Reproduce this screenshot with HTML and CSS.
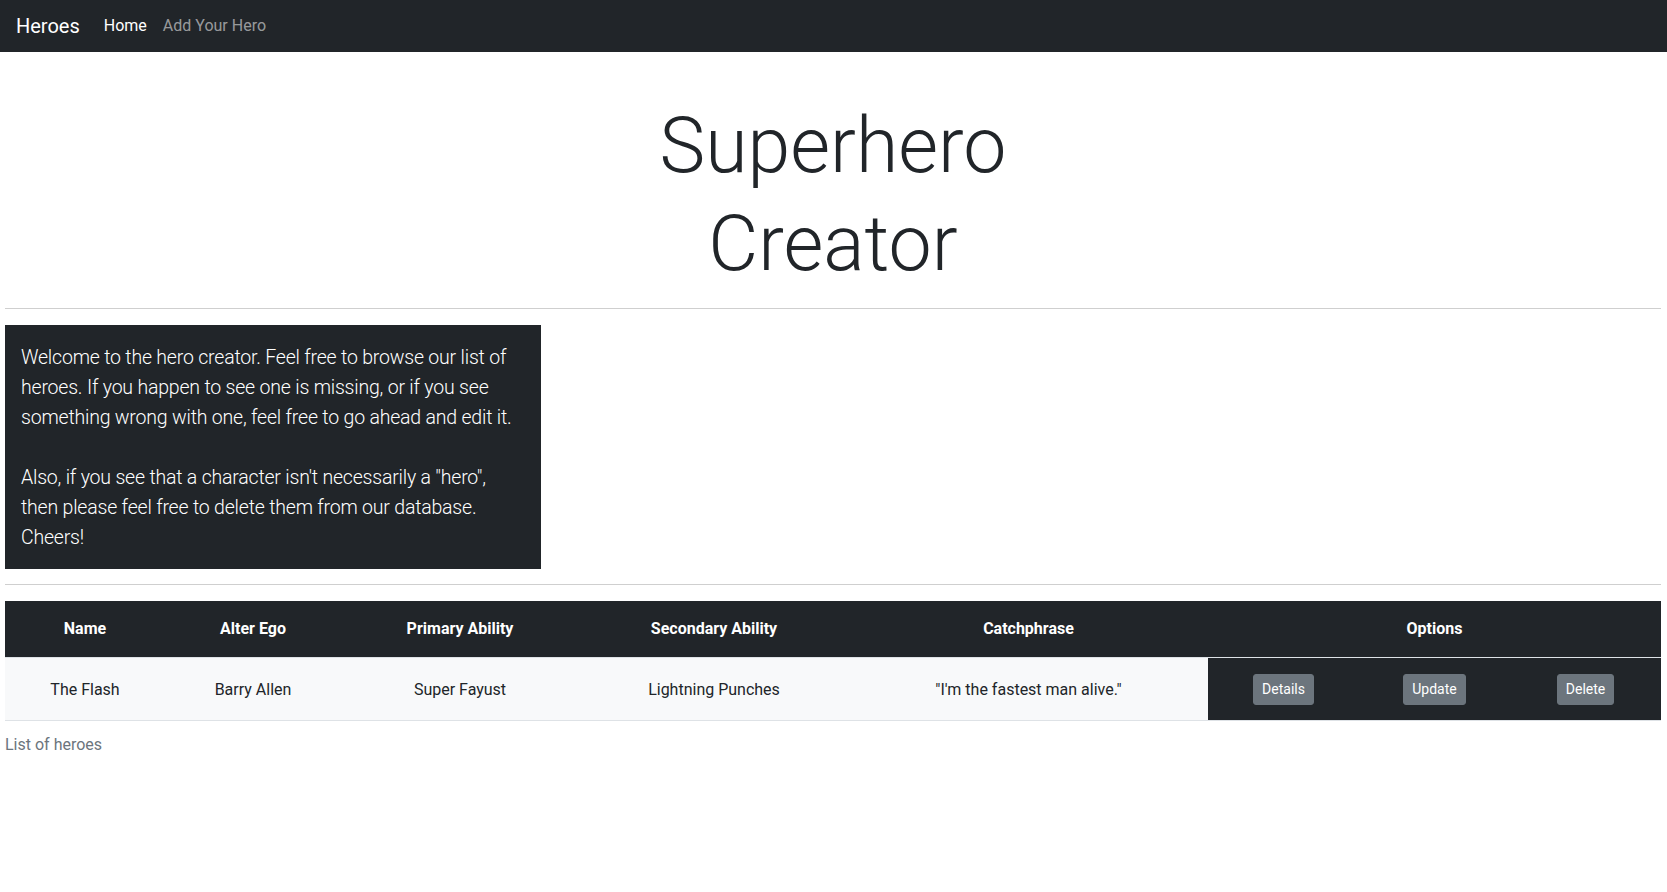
FILE: index.html
```html
<!DOCTYPE html>
<html lang="en">
<head>
<meta charset="UTF-8">
<meta name="viewport" content="width=device-width, initial-scale=1.0">
<title>Heroes</title>
<link rel="stylesheet" href="styles.css">
</head>
<body>
<nav class="navbar">
    <a class="brand" href="#">Heroes</a>
    <ul class="nav-links">
        <li><a class="active" href="#">Home</a></li>
        <li><a href="#">Add Your Hero</a></li>
    </ul>
</nav>
<main class="page">
    <h1 class="title">Superhero Creator</h1>
    <hr>
    <div class="intro">
        <p>Welcome to the hero creator. Feel free to browse our list of<br>
        heroes. If you happen to see one is missing, or if you see<br>
        something wrong with one, feel free to go ahead and edit it.<br>
        <br>
        Also, if you see that a character isn't necessarily a "hero",<br>
        then please feel free to delete them from our database.<br>
        Cheers!</p>
    </div>
    <hr>
    <table class="heroes">
        <caption>List of heroes</caption>
        <colgroup>
            <col class="c-name">
            <col class="c-ego">
            <col class="c-primary">
            <col class="c-secondary">
            <col class="c-phrase">
            <col class="c-options">
        </colgroup>
        <thead>
            <tr>
                <th>Name</th>
                <th>Alter Ego</th>
                <th>Primary Ability</th>
                <th>Secondary Ability</th>
                <th>Catchphrase</th>
                <th>Options</th>
            </tr>
        </thead>
        <tbody>
            <tr>
                <td>The Flash</td>
                <td>Barry Allen</td>
                <td>Super Fayust</td>
                <td>Lightning Punches</td>
                <td>"I'm the fastest man alive."</td>
                <td class="options">
                    <div class="option-buttons">
                        <span><button class="btn">Details</button></span>
                        <span><button class="btn">Update</button></span>
                        <span><button class="btn">Delete</button></span>
                    </div>
                </td>
            </tr>
        </tbody>
    </table>
</main>
</body>
</html>
```

FILE: styles.css
```css
body {
    font-family: Roboto, "Noto Sans", sans-serif;
    font-size: 16px;
    line-height: 24px;
    color: #212529;
    background-color: #fff;
    margin: 0;
    padding: 0;
}
.navbar {
    display: flex;
    align-items: center;
    height: 52px;
    padding: 0 16px;
    background-color: #212529;
}
.brand {
    font-size: 20px;
    line-height: 30px;
    color: #fff;
    text-decoration: none;
    margin-right: 16px;
}
.nav-links {
    display: flex;
    list-style: none;
    margin: 0;
    padding: 0;
}
.nav-links a {
    display: block;
    padding: 8px;
    color: rgba(255, 255, 255, 0.55);
    text-decoration: none;
}
.nav-links a.active {
    color: #fff;
}
.page {
    padding: 0 6px 0 5px;
}
.title {
    width: 560px;
    margin: 45px auto 0;
    font-size: 77px;
    line-height: 98px;
    font-weight: 300;
    text-align: center;
}
hr {
    border: none;
    border-top: 1px solid #cfcfcf;
    margin: 15px 0 16px;
}
.intro {
    width: 536px;
    box-sizing: border-box;
    padding: 18px 16px 16px;
    background-color: #212529;
    color: #fff;
}
.intro p {
    margin: 0;
    font-size: 19.5px;
    line-height: 30px;
    font-weight: 300;
    letter-spacing: -0.2px;
    white-space: nowrap;
}
.heroes {
    width: 100%;
    border-collapse: collapse;
    caption-side: bottom;
    text-align: center;
}
.heroes caption {
    text-align: left;
    color: #6c757d;
    padding: 12px 0;
}
.c-name { width: 160px; }
.c-ego { width: 176px; }
.c-primary { width: 238px; }
.c-secondary { width: 270px; }
.c-phrase { width: 359px; }
.heroes th {
    padding: 16px;
    background-color: #212529;
    color: #fff;
    font-weight: 700;
}
.heroes td {
    padding: 16px 16px 15px;
    background-color: #f8f9fa;
    border-top: 1px solid #dee2e6;
    border-bottom: 1px solid #dee2e6;
}
.heroes td.options {
    background-color: #212529;
    padding-left: 0;
    padding-right: 0;
}
.option-buttons {
    display: grid;
    grid-template-columns: 1fr 1fr 1fr;
}
.btn {
    font-family: inherit;
    font-size: 14px;
    line-height: 21px;
    padding: 4px 8px;
    color: #fff;
    background-color: #6c757d;
    border: 1px solid #6c757d;
    border-radius: 3px;
    cursor: pointer;
}
```
